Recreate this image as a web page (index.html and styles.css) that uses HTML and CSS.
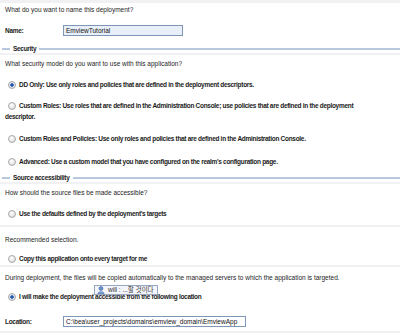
FILE: index.html
```html
<!DOCTYPE html>
<html lang="en">
<head>
    <meta charset="UTF-8">
    <title>Deployment settings</title>
    <link rel="stylesheet" href="styles.css">
</head>
<body>
    <div class="page">
        <div class="top-band"></div>
        <p class="question first">What do you want to name this deployment?</p>
        <div class="field name-field">
            <label class="field-label">Name:</label>
            <div class="text-box name-box">EmviewTutorial</div>
        </div>

        <div class="legend security"><span class="legend-text">Security</span></div>
        <p class="question after-legend">What security model do you want to use with this application?</p>
        <div class="option checked gap-10"><span class="radio"></span>DD Only: Use only roles and policies that are defined in the deployment descriptors.</div>
        <div class="option gap-10"><span class="radio"></span>Custom Roles: Use roles that are defined in the Administration Console; use policies that are defined in the deployment descriptor.</div>
        <div class="option gap-11"><span class="radio"></span>Custom Roles and Policies: Use only roles and policies that are defined in the Administration Console.</div>
        <div class="option gap-12"><span class="radio"></span>Advanced: Use a custom model that you have configured on the realm's configuration page.</div>

        <div class="legend source"><span class="legend-text">Source accessibility</span></div>
        <p class="question after-legend">How should the source files be made accessible?</p>
        <div class="option gap-10"><span class="radio"></span>Use the defaults defined by the deployment's targets</div>
        <div class="separator gap-6"></div>
        <p class="note gap-7">Recommended selection.</p>
        <div class="option gap-8"><span class="radio"></span>Copy this application onto every target for me</div>
        <div class="separator gap-1"></div>
        <p class="note gap-5">During deployment, the files will be copied automatically to the managed servers to which the application is targeted.</p>
        <div class="option checked gap-8 has-tip">
            <span class="radio"></span>I will make the deployment accessible from the following location
            <div class="tooltip">
                <svg class="tip-icon" width="8" height="8" viewBox="0 0 9 9">
                    <circle cx="4.5" cy="2.8" r="2.2" fill="#6b93c9" stroke="#3d68a8" stroke-width="0.7"/>
                    <path d="M1 8.6 C1 5.8 8 5.8 8 8.6 Z" fill="#8fb0dc" stroke="#3d68a8" stroke-width="0.7"/>
                </svg>
                <span class="tip-text">will : ...할 것이다</span>
            </div>
        </div>
        <div class="field location-field">
            <label class="field-label">Location:</label>
            <div class="text-box path-box">C:\bea\user_projects\domains\emview_domain\EmviewApp</div>
        </div>
        <div class="separator gap-4"></div>
    </div>
</body>
</html>
```

FILE: styles.css
```css
* {
    margin: 0;
    padding: 0;
    box-sizing: border-box;
}

body {
    background: #fff;
    font-family: "Liberation Sans", Arial, sans-serif;
    font-size: 6.5px;
    color: #1c1c1c;
    width: 400px;
    height: 335px;
    overflow: hidden;
}

.page {
    padding-right: 20px;
}

.top-band {
    height: 3px;
    margin-right: -20px;
    background: #f1f1f3;
}

.question,
.note {
    line-height: 11px;
    padding-left: 5px;
}

.first {
    margin-top: 1px;
}

.after-legend {
    margin-top: 3px;
}

/* spacing between rows */
.gap-1 { margin-top: 1px; }
.gap-4 { margin-top: 4px; }
.gap-5 { margin-top: 5px; }
.gap-6 { margin-top: 6px; }
.gap-7 { margin-top: 7px; }
.gap-8 { margin-top: 8px; }
.gap-10 { margin-top: 10px; }
.gap-11 { margin-top: 11px; }
.gap-12 { margin-top: 12px; }

/* label + text box rows */
.field {
    display: flex;
    align-items: center;
    height: 12px;
    padding-left: 5px;
}

.name-field {
    margin-top: 9px;
}

.location-field {
    margin-top: 13px;
}

.field-label {
    width: 58px;
    font-weight: bold;
    letter-spacing: -0.3px;
}

.text-box {
    height: 11px;
    line-height: 9px;
    border: 1px solid #7c97b8;
    padding: 0 2px;
    color: #111;
    white-space: nowrap;
    overflow: hidden;
}

.name-box {
    width: 120px;
    background: #e8eff9;
}

.path-box {
    width: 183px;
    background: #fff;
}

/* fieldset-like section headers */
.legend {
    display: flex;
    align-items: center;
    height: 11px;
    margin-right: -20px;
    border-bottom: 2px solid #f1f1f3;
}

.security {
    margin-top: 8px;
}

.source {
    margin-top: 6px;
}

.legend::before,
.legend::after {
    content: '';
    height: 2px;
    background: #b7c8dc;
}

.legend::before {
    width: 8px;
    margin-left: 2px;
}

.legend::after {
    flex: 1;
}

.legend-text {
    font-weight: bold;
    letter-spacing: -0.3px;
    padding: 0 3px;
    color: #222;
}

/* radio rows */
.option {
    position: relative;
    padding-left: 5px;
    line-height: 11px;
    font-weight: bold;
    letter-spacing: -0.3px;
}

.radio {
    float: left;
    width: 8px;
    height: 8px;
    margin: 2px 3px 0 3px;
    border-radius: 50%;
    border: 1px solid #a8a8a8;
    background: radial-gradient(circle at 40% 35%, #fff 0%, #e4e4e4 65%, #cdcdcd 100%);
}

.checked .radio {
    background: radial-gradient(circle, #1d4c9c 0, #3465b6 1.5px, #e6ecf6 2.1px, #d4d4d4 100%);
}

.separator {
    height: 2px;
    margin-right: -20px;
    background: #f1f1f3;
}

/* tooltip floating over the last option */
.tooltip {
    position: absolute;
    left: 94px;
    top: -6px;
    display: flex;
    align-items: center;
    gap: 3px;
    height: 10px;
    padding: 0 3px 0 2px;
    background: #f3f5fa;
    border: 1px solid #98a8c4;
    font-weight: normal;
    letter-spacing: 0;
    line-height: 8px;
    color: #333;
    white-space: nowrap;
}

.tip-text {
    font-family: "Liberation Sans", "Noto Sans CJK KR", sans-serif;
}
```
